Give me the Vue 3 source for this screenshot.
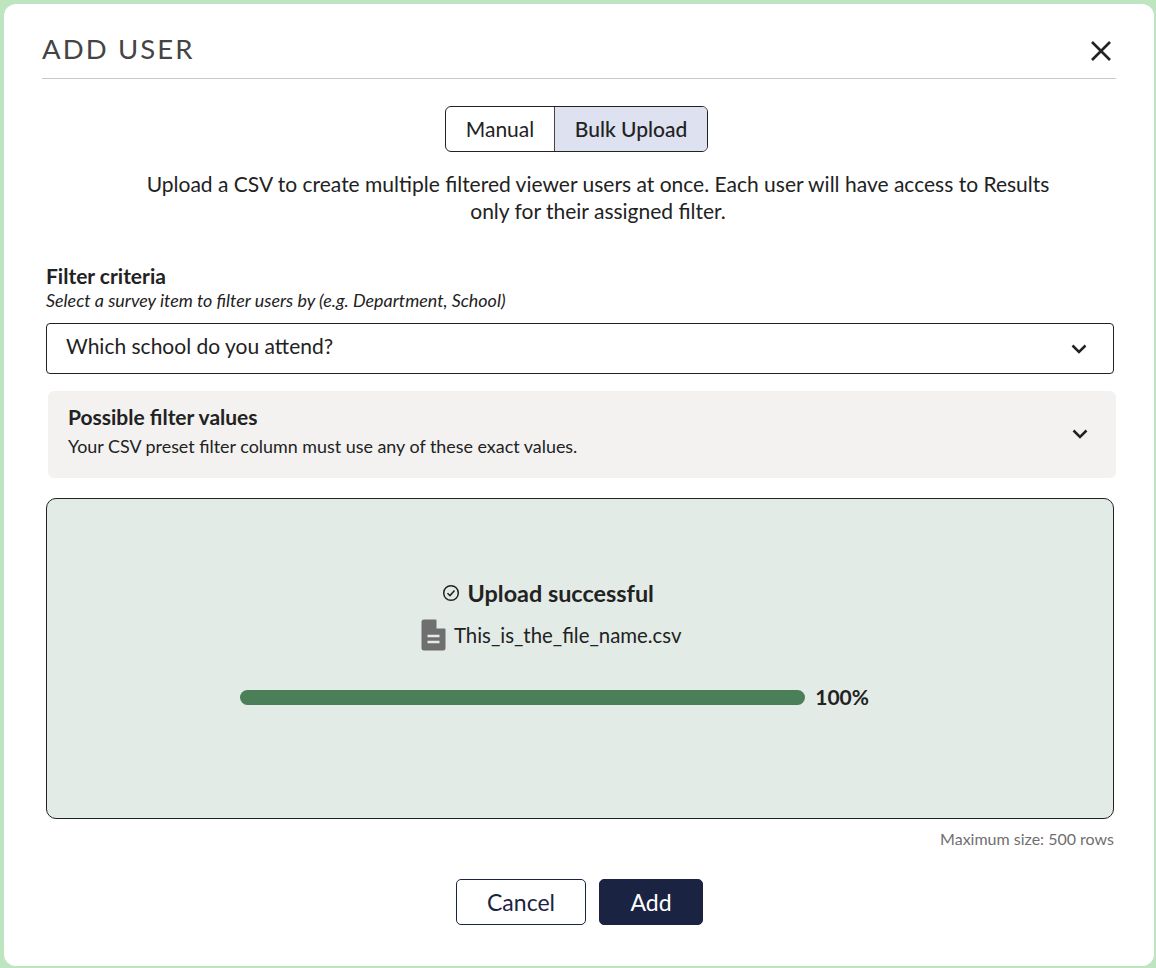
<script setup>
const title = 'ADD USER'
</script>

<template>
  <div class="page">
    <div class="dialog">
      <header class="head">
        <h1 class="title">{{ title }}</h1>
        <svg class="close" width="24" height="24" viewBox="0 0 24 24"><path d="M3 3 L21 21 M21 3 L3 21" stroke="#222" stroke-width="2.6" fill="none"/></svg>
      </header>
      <div class="toggle">
        <div class="tab">Manual</div>
        <div class="tab active">Bulk Upload</div>
      </div>
      <p class="desc">Upload a CSV to create multiple filtered viewer users at once. Each user will have access to Results only for their assigned filter.</p>
      <div class="label">Filter criteria</div>
      <div class="hint">Select a survey item to filter users by (e.g. Department, School)</div>
      <div class="select">
        <span class="select-text">Which school do you attend?</span>
        <svg class="chev" width="16" height="10" viewBox="0 0 16 10"><path d="M1.5 1.5 L8 8 L14.5 1.5" stroke="#222" stroke-width="2.5" fill="none"/></svg>
      </div>
      <div class="panel">
        <div class="panel-text">
          <div class="panel-title">Possible filter values</div>
          <div class="panel-sub">Your CSV preset filter column must use any of these exact values.</div>
        </div>
        <svg class="chev" width="16" height="10" viewBox="0 0 16 10"><path d="M1.5 1.5 L8 8 L14.5 1.5" stroke="#222" stroke-width="2.5" fill="none"/></svg>
      </div>
      <div class="upload">
        <div class="status">
          <svg width="18" height="18" viewBox="0 0 18 18"><circle cx="9" cy="9" r="7.3" stroke="#222" stroke-width="1.5" fill="none"/><path d="M5.5 9.2 L8 11.6 L12.5 6.5" stroke="#222" stroke-width="1.5" fill="none"/></svg>
          <span>Upload successful</span>
        </div>
        <div class="file">
          <svg width="25" height="32" viewBox="0 0 25 32"><path d="M3 0.5 H15 L24.5 10 V29 a2.5 2.5 0 0 1 -2.5 2.5 H3 a2.5 2.5 0 0 1 -2.5 -2.5 V3 a2.5 2.5 0 0 1 2.5 -2.5 Z" fill="#6f6f6f"/><path d="M15.5 0.5 V9.5 H24.5 Z" fill="#e2ebe6"/><path d="M6.5 17 H18.5 M6.5 23 H18.500" stroke="#e2ebe6" stroke-width="2.6"/></svg>
          <span>This_is_the_file_name.csv</span>
        </div>
        <div class="progress">
          <div class="bar"></div>
          <span class="pct">100%</span>
        </div>
      </div>
      <div class="max">Maximum size: 500 rows</div>
      <div class="actions">
        <button class="btn cancel">Cancel</button>
        <button class="btn add">Add</button>
      </div>
    </div>
  </div>
</template>

<style>
body { margin: 0; background: #bde5c0; }
</style>

<style scoped>
.page {
  width: 1156px;
  height: 968px;
  padding: 4px 2px 2px 4px;
  box-sizing: border-box;
  background: #bde5c0;
  font-family: Lato, "Liberation Sans", sans-serif;
  color: #222;
  overflow: hidden;
}
.dialog {
  height: 962px;
  box-sizing: border-box;
  background: #fff;
  border-radius: 12px;
  padding: 0 38px;
}
.head {
  height: 75px;
  box-sizing: border-box;
  border-bottom: 1.5px solid #c9c9c9;
  display: flex;
  align-items: center;
  justify-content: space-between;
  padding: 20px 3px 0 0;
}
.title {
  margin: 0 0 5px;
  font-size: 27.5px;
  font-weight: 400;
  letter-spacing: 2.1px;
  color: #444;
  line-height: 36px;
}
.toggle {
  width: 263px;
  height: 46px;
  box-sizing: border-box;
  margin: 27px 0 0 403px;
  border: 1.5px solid #222;
  border-radius: 6px;
  display: flex;
  overflow: hidden;
  font-size: 21px;
}
.tab {
  width: 108px;
  padding-bottom: 2px;
  display: flex;
  align-items: center;
  justify-content: center;
}
.tab.active {
  flex: 1;
  background: #dde1f0;
  border-left: 1.5px solid #444;
  font-weight: 500;
}
.desc {
  margin: 18px 0 0 96px;
  width: 920px;
  text-align: center;
  font-size: 21px;
  line-height: 27px;
}
.label {
  margin: 39px 0 0 4px;
  font-size: 21px;
  font-weight: 700;
  line-height: 26px;
}
.hint {
  margin: 0 0 0 4px;
  font-size: 17.9px;
  font-style: italic;
  line-height: 22px;
}
.select {
  margin: 12px 0 0 4px;
  width: 1068px;
  height: 51px;
  box-sizing: border-box;
  border: 1.5px solid #222;
  border-radius: 4px;
  padding: 0 26px 0 19px;
  display: flex;
  align-items: center;
  justify-content: space-between;
  font-size: 21px;
}
.select-text {
  margin-bottom: 6px;
}
.panel {
  margin: 17px 0 0 6px;
  width: 1068px;
  height: 87px;
  box-sizing: border-box;
  background: #f3f2f1;
  border-radius: 6px;
  padding: 0 28px 2px 20px;
  display: flex;
  align-items: center;
  justify-content: space-between;
}
.panel-text {
  margin-bottom: 6px;
}
.panel-title {
  font-size: 21px;
  font-weight: 700;
  line-height: 27px;
}
.panel-sub {
  margin-top: 4px;
  font-size: 17.9px;
  line-height: 24px;
}
.upload {
  margin: 20px 0 0 3.5px;
  width: 1068.5px;
  height: 320.5px;
  box-sizing: border-box;
  background: #e2ebe6;
  border: 1.5px solid #222;
  border-radius: 10px;
  padding-top: 79px;
  display: flex;
  flex-direction: column;
  align-items: center;
}
.status {
  display: flex;
  align-items: center;
  gap: 8px;
  margin-left: -64px;
  font-size: 23.4px;
  font-weight: 700;
  line-height: 30px;
}
.file {
  margin-top: 11px;
  margin-left: -57px;
  display: flex;
  align-items: center;
  gap: 8px;
  font-size: 20.4px;
  line-height: 32px;
}
.progress {
  margin: 34px 0 0 -50px;
  display: flex;
  align-items: center;
  gap: 10px;
}
.bar {
  width: 565px;
  height: 15px;
  border-radius: 8px;
  background: #4a7f57;
}
.pct {
  width: 54px;
  font-size: 21px;
  font-weight: 700;
  line-height: 24px;
}
.max {
  margin: 10px 0 0;
  width: 1072px;
  text-align: right;
  font-size: 16px;
  line-height: 20px;
  color: #6f6f6f;
}
.actions {
  margin: 30px 0 0 414px;
  display: flex;
  gap: 13px;
}
.btn {
  height: 46px;
  box-sizing: border-box;
  border-radius: 5px;
  font-family: inherit;
  font-size: 23px;
  padding: 0;
}
.cancel {
  width: 130px;
  background: #fff;
  border: 1.5px solid #1b2342;
  color: #1b2342;
}
.add {
  width: 104px;
  background: #1b2342;
  border: 1.5px solid #1b2342;
  color: #fff;
}
</style>
